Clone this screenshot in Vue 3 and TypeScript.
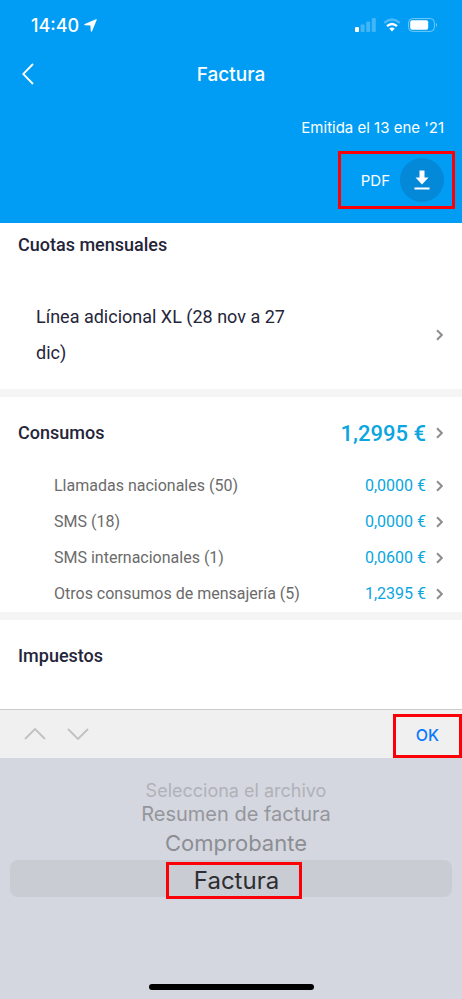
<script setup lang="ts">
import { ref } from 'vue'

interface Usage {
  label: string
  amount: string
}

interface Choice {
  label: string
  level: string
}

const usages: Usage[] = [
  { label: 'Llamadas nacionales (50)', amount: '0,0000 €' },
  { label: 'SMS (18)', amount: '0,0000 €' },
  { label: 'SMS internacionales (1)', amount: '0,0600 €' },
  { label: 'Otros consumos de mensajería (5)', amount: '1,2395 €' },
]

const choices: Choice[] = [
  { label: 'Selecciona el archivo', level: 'farthest' },
  { label: 'Resumen de factura', level: 'far' },
  { label: 'Comprobante', level: 'near' },
  { label: 'Factura', level: 'current' },
]

const selected = ref('Factura')
</script>

<template>
  <div class="screen">
    <header class="top">
      <div class="status">
        <div class="clock">
          <span>14:40</span>
          <svg class="location" viewBox="0 0 13 13" aria-hidden="true">
            <path d="M12 .3Q13 0 12.7 1L8 12.2Q7.2 13.4 6.8 12L6.4 6.6 1 6.2Q-.4 5.8.8 5Z" />
          </svg>
        </div>
        <div class="signals">
          <svg class="cell" viewBox="0 0 21 14" aria-hidden="true">
            <rect x="0" y="9" width="4" height="5" rx="1" />
            <g opacity=".25">
              <rect x="5.6" y="6.5" width="4" height="7.5" rx="1" />
              <rect x="11.2" y="3.5" width="4" height="10.5" rx="1" />
              <rect x="16.8" y="0" width="4" height="14" rx="1" />
            </g>
          </svg>
          <svg class="wifi" viewBox="0 0 18 14" aria-hidden="true">
            <path class="arc faint" d="M1.2 4.8Q9-1.8 16.8 4.8" />
            <path class="arc" d="M4 8.1Q9 3.7 14 8.1" />
            <path d="M6.2 10.6Q9 8.4 11.8 10.6L9 13.5Z" />
          </svg>
          <svg class="battery" viewBox="0 0 30 14" aria-hidden="true">
            <rect class="shell" x=".6" y=".6" width="25.8" height="12.8" rx="4" />
            <rect x="2.2" y="2.2" width="18" height="9.6" rx="2" />
            <path opacity=".45" d="M28 4.8Q30 7 28 9.2Z" />
          </svg>
        </div>
      </div>

      <div class="nav">
        <button class="back" type="button" aria-label="Atrás">
          <svg viewBox="0 0 12 22" aria-hidden="true"><path d="M11 1 1.2 11 11 21" /></svg>
        </button>
        <h1>Factura</h1>
      </div>

      <p class="issued">Emitida el 13 ene '21</p>
      <button class="pdf marked" type="button">
        <span>PDF</span>
        <span class="disc">
          <svg viewBox="0 0 16 20" aria-hidden="true">
            <path d="M5.5 0.5h5V7.5H14.5L8 14.5 1.5 7.5H5.5Z" />
            <rect x="0.5" y="17.5" width="15" height="2" />
          </svg>
        </span>
      </button>
    </header>

    <main class="bill">
      <section class="fees">
        <h2>Cuotas mensuales</h2>
        <button class="row fee" type="button">
          <span class="fee-name">Línea adicional XL (28 nov a 27 dic)</span>
          <svg class="chevron" viewBox="0 0 7 12" aria-hidden="true"><path d="M1 1.2 5.8 6 1 10.8" /></svg>
        </button>
      </section>

      <section class="usage">
        <button class="row total" type="button">
          <span class="heading">Consumos</span>
          <span class="sum">1,2995 €</span>
          <svg class="chevron" viewBox="0 0 7 12" aria-hidden="true"><path d="M1 1.2 5.8 6 1 10.8" /></svg>
        </button>
        <button v-for="usage in usages" :key="usage.label" class="row item" type="button">
          <span class="name">{{ usage.label }}</span>
          <span class="amount">{{ usage.amount }}</span>
          <svg class="chevron" viewBox="0 0 7 12" aria-hidden="true"><path d="M1 1.2 5.8 6 1 10.8" /></svg>
        </button>
      </section>

      <section class="taxes">
        <h2>Impuestos</h2>
      </section>
    </main>

    <div class="toolbar">
      <div class="steps">
        <button type="button" aria-label="Anterior" disabled>
          <svg viewBox="0 0 22 12" aria-hidden="true"><path d="M1 11 11 1 21 11" /></svg>
        </button>
        <button type="button" aria-label="Siguiente" disabled>
          <svg viewBox="0 0 22 12" aria-hidden="true"><path d="M1 1 11 11 21 1" /></svg>
        </button>
      </div>
      <button class="ok marked" type="button">OK</button>
    </div>

    <div class="picker" role="radiogroup" aria-label="Archivo">
      <label v-for="choice in choices" :key="choice.label" class="choice" :class="choice.level">
        <input v-model="selected" type="radio" name="file" :value="choice.label" />
        <span>{{ choice.label }}</span>
      </label>
      <div class="home"></div>
    </div>
  </div>
</template>

<style>
body {
  margin: 0;
  background: #d4d7df;
}
</style>

<style scoped>
.screen {
  display: flex;
  flex-direction: column;
  min-height: 100vh;
  font-family: Roboto, "Liberation Sans", sans-serif;
  color: #25253a;
  background: #fff;
}

button {
  margin: 0;
  padding: 0;
  border: 0;
  background: none;
  color: inherit;
  font: inherit;
  text-align: left;
  cursor: pointer;
}

svg {
  display: block;
  flex: none;
}

h1,
h2,
p {
  margin: 0;
}

.marked {
  border: 3px solid #fb0007;
}

.top {
  display: flex;
  flex-direction: column;
  padding-bottom: 14px;
  background: #019df4;
  color: #fff;
  font-family: Inter, "Liberation Sans", sans-serif;
}

.status {
  display: flex;
  justify-content: space-between;
  align-items: center;
  height: 50px;
  padding: 0 24px 0 31px;
}

.clock {
  display: flex;
  align-items: center;
  gap: 5px;
  font-size: 18px;
  font-weight: 500;
}

.location {
  width: 13px;
  height: 13px;
  fill: #fff;
}

.signals {
  display: flex;
  align-items: center;
  gap: 7px;
  fill: #fff;
}

.cell {
  width: 21px;
  height: 14px;
}

.wifi {
  width: 18px;
  height: 14px;
}

.arc {
  fill: none;
  stroke: #fff;
  stroke-width: 2.4;
}

.faint {
  opacity: 0.3;
}

.battery {
  width: 30px;
  height: 14px;
}

.shell {
  fill: none;
  stroke: #fff;
  stroke-width: 1;
  opacity: 0.45;
}

.nav {
  display: grid;
  grid-template-columns: 40px 1fr 40px;
  align-items: center;
  height: 48px;
  padding: 0 16px;
}

.back {
  padding-left: 6px;
}

.back svg {
  width: 12px;
  height: 22px;
  fill: none;
  stroke: #fff;
  stroke-width: 1.8;
}

h1 {
  font-size: 19px;
  font-weight: 500;
  text-align: center;
}

.issued {
  padding: 18px 18px 12px;
  font-size: 15px;
  line-height: 23px;
  text-align: right;
}

.pdf {
  display: flex;
  align-items: center;
  align-self: flex-end;
  gap: 10px;
  margin-right: 7px;
  padding: 4px 8px 4px 20px;
  font-size: 15px;
}

.disc {
  display: grid;
  place-items: center;
  width: 44px;
  height: 44px;
  border-radius: 50%;
  background: #0488d8;
}

.disc svg {
  width: 16px;
  height: 20px;
  fill: #fff;
}

.bill {
  display: flex;
  flex-direction: column;
  gap: 8px;
  background: #f5f5f5;
}

section {
  background: #fff;
}

h2,
.heading {
  font-size: 18px;
  font-weight: 500;
  line-height: 36px;
}

.row {
  display: flex;
  align-items: center;
  width: 100%;
  padding-right: 19px;
}

.chevron {
  width: 7px;
  height: 12px;
  fill: none;
  stroke: #8d8d8d;
  stroke-width: 2;
}

.fees {
  padding: 4px 0 18px;
}

.fees h2,
.taxes h2 {
  padding-left: 18px;
}

.fee {
  justify-content: space-between;
  margin-top: 36px;
  padding-left: 36px;
  font-size: 18px;
  line-height: 36px;
}

.fee-name {
  max-width: 64%;
}

.usage {
  padding: 18px 0 0;
}

.total {
  margin-bottom: 17px;
  padding-left: 18px;
}

.heading,
.name {
  flex: 1;
}

.sum {
  margin-right: 10px;
  color: #0ba6e0;
  font-size: 22px;
  font-weight: 500;
}

.item {
  padding-left: 54px;
  color: #6b6b6b;
  font-size: 16px;
  line-height: 36px;
}

.amount {
  margin-right: 10px;
  color: #0ba6e0;
}

.taxes {
  padding: 18px 0 35px;
}

.toolbar {
  display: flex;
  justify-content: space-between;
  align-items: flex-end;
  height: 48px;
  border-top: 1px solid #cbcbcd;
  background: #f0f0f0;
}

.steps {
  display: flex;
  align-self: center;
  gap: 21px;
  padding-left: 24px;
}

.steps svg {
  width: 22px;
  height: 12px;
  fill: none;
  stroke: #c1c1c3;
  stroke-width: 1.8;
}

.ok {
  padding: 0 20px 2px;
  color: #087aff;
  font-family: Inter, "Liberation Sans", sans-serif;
  font-size: 16px;
  font-weight: 500;
  line-height: 36px;
}

.picker {
  display: flex;
  flex: 1;
  flex-direction: column;
  align-items: center;
  padding: 22px 10px 9px;
  background: #d4d7df;
  font-family: Inter, "Liberation Sans", sans-serif;
}

.choice {
  position: relative;
  display: flex;
  align-items: flex-start;
  justify-content: center;
  padding-left: 10px;
  cursor: pointer;
}

.choice input {
  position: absolute;
  opacity: 0;
}

.farthest {
  color: #b0b2b8;
  font-size: 18px;
  line-height: 22px;
}

.far {
  color: #94969b;
  font-size: 20px;
  line-height: 24px;
}

.near {
  color: #8c8e93;
  font-size: 22px;
  line-height: 34px;
}

.current {
  align-self: stretch;
  height: 37px;
  padding-left: 6px;
  border-radius: 8px;
  background: #c9ccd3;
  color: #2d2e31;
}

.current span {
  margin-top: 2px;
  padding: 0 20px 0 25px;
  border: 3px solid #fb0007;
  font-size: 24px;
  line-height: 31px;
}

.home {
  width: 165px;
  height: 6px;
  margin-top: auto;
  border-radius: 3px;
  background: #000;
}
</style>
